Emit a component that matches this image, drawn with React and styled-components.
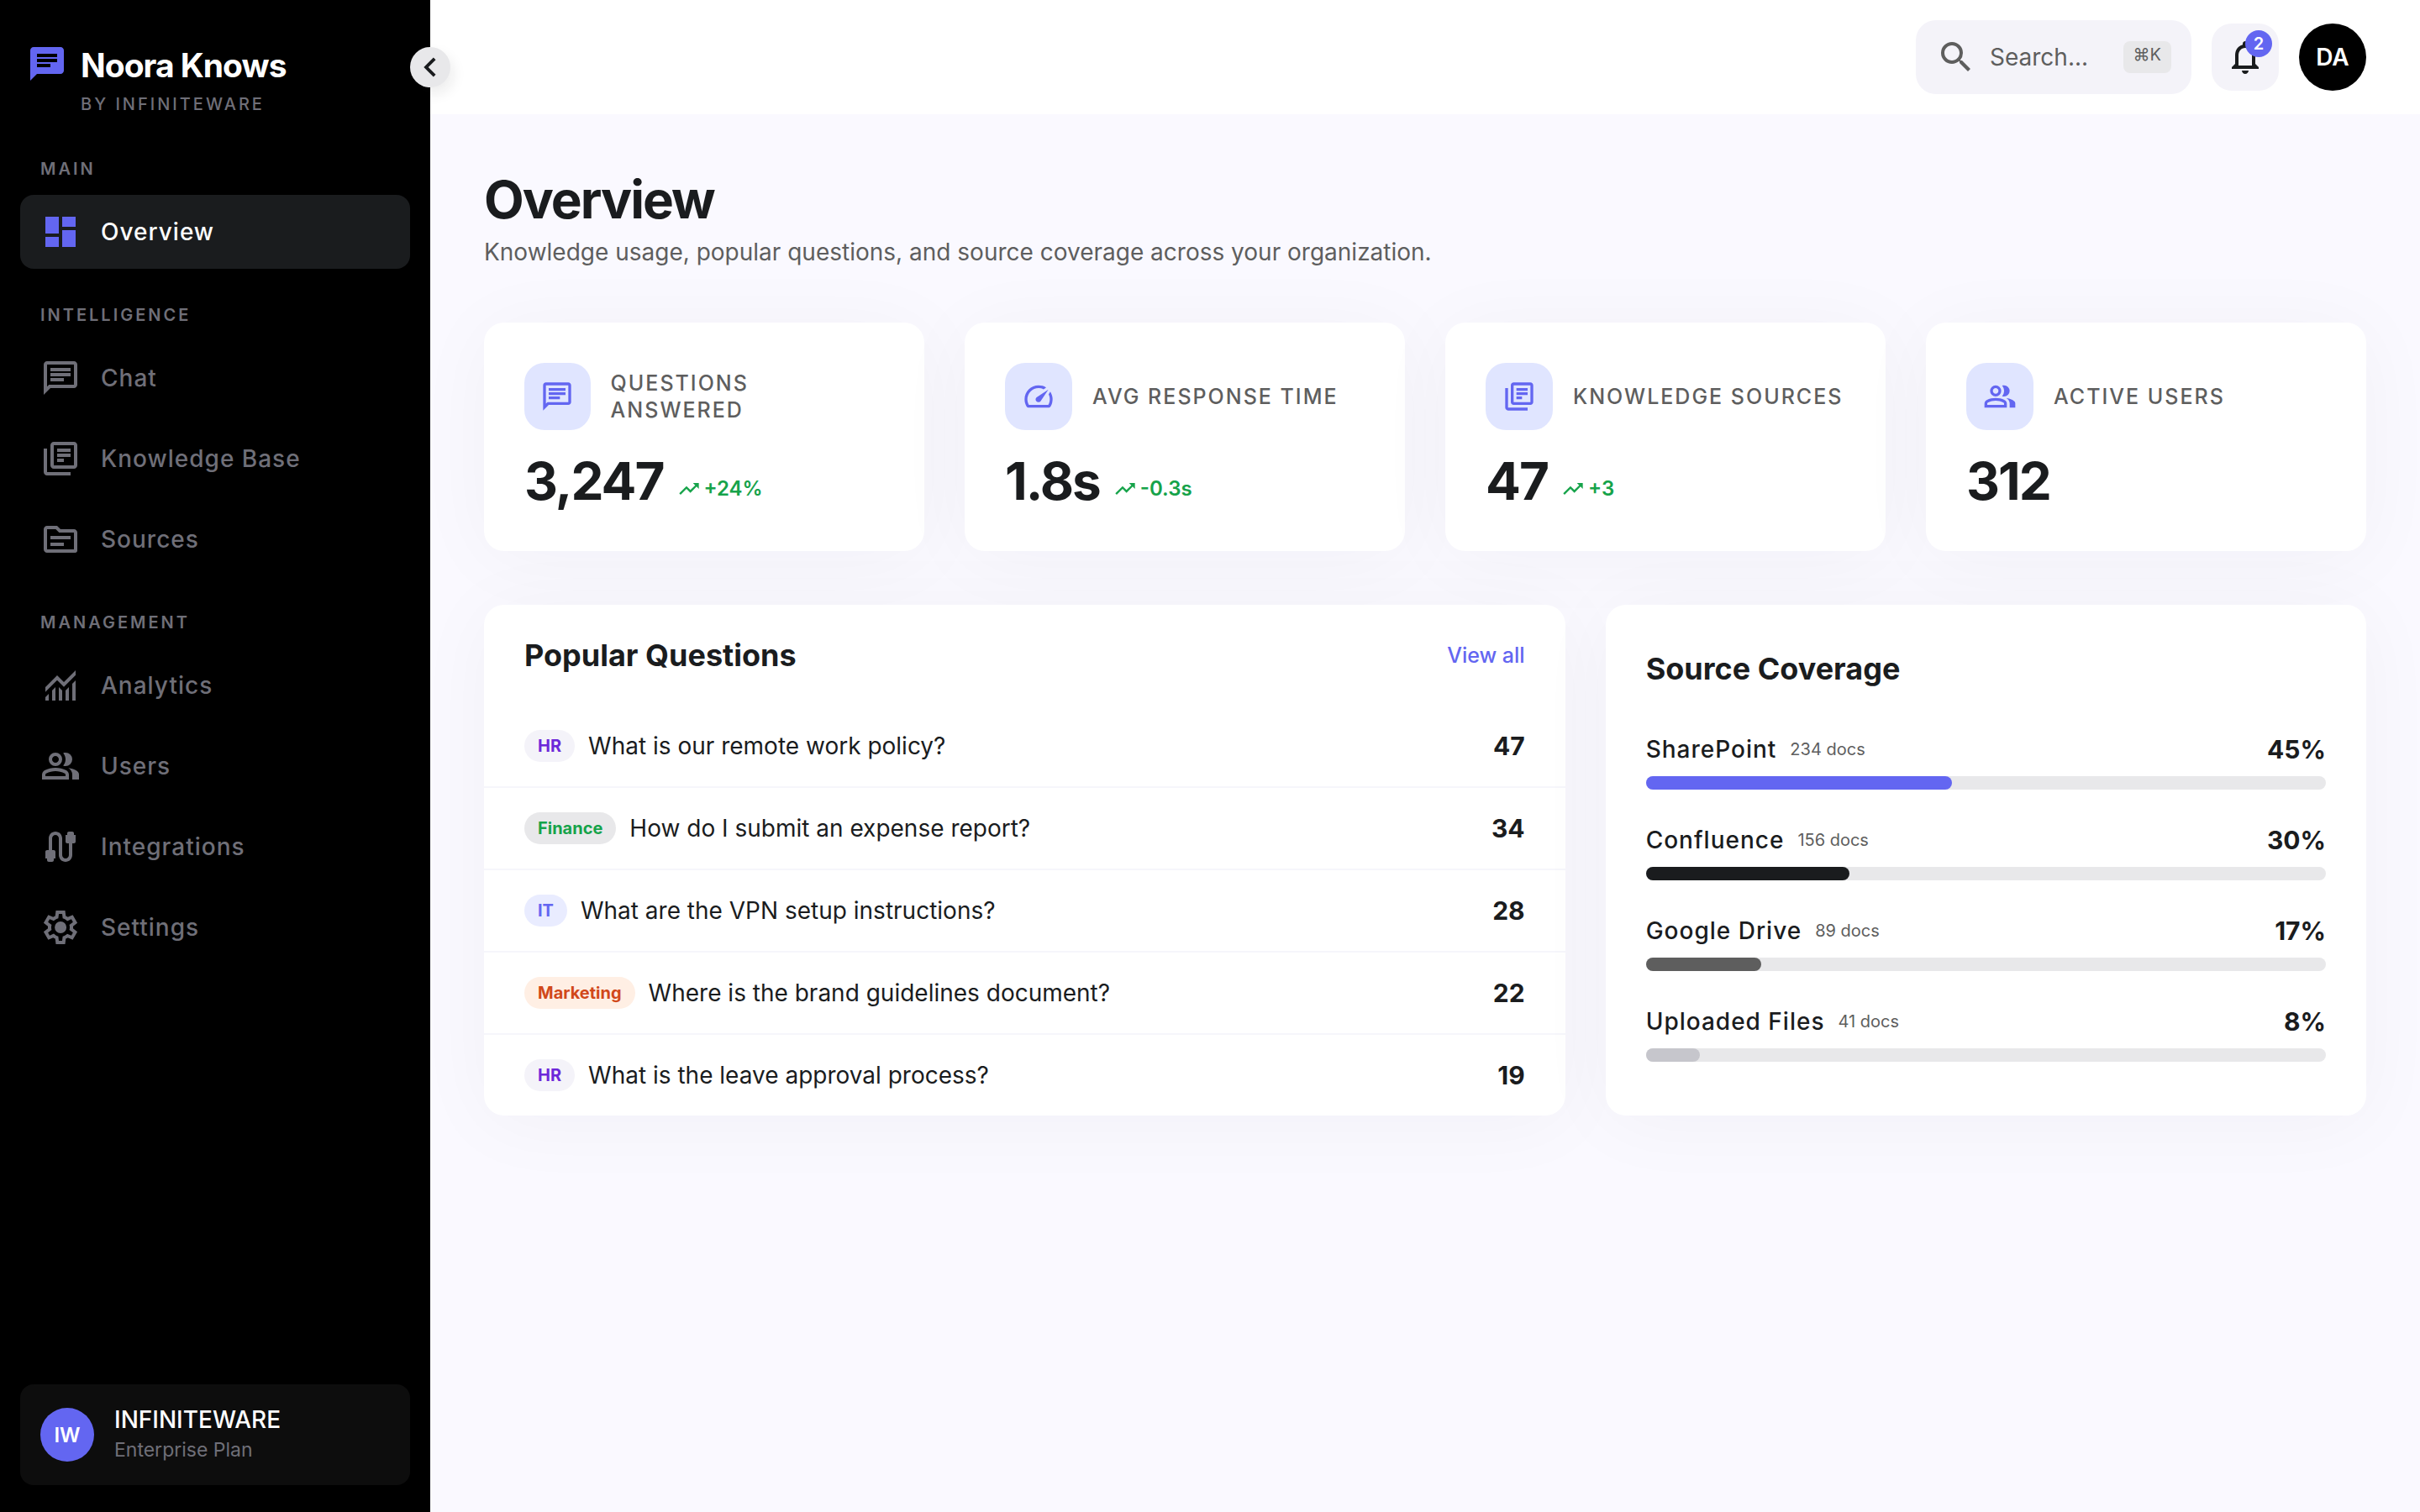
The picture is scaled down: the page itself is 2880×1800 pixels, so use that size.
import React from "react";
import styled, { createGlobalStyle } from "styled-components";
import {
  MdChat,
  MdOutlineChat,
  MdDashboard,
  MdOutlineLibraryBooks,
  MdOutlineTopic,
  MdOutlineCable,
  MdChevronLeft,
  MdSearch,
  MdOutlineNotifications,
  MdTrendingUp,
} from "react-icons/md";

const GlobalStyle = createGlobalStyle`
  *, *::before, *::after {
    box-sizing: border-box;
  }

  body {
    margin: 0;
    background: #faf9ff;
    color: #1a1c1e;
    font-family: Inter, "Liberation Sans", sans-serif;
    font-size: 28px;
  }

  h1, h2, p, ul {
    margin: 0;
    padding: 0;
  }

  ul {
    list-style: none;
  }

  button {
    border: 0;
    padding: 0;
    font: inherit;
    cursor: pointer;
  }

  a {
    text-decoration: none;
  }

  svg {
    flex-shrink: 0;
  }
`;

/* ---------- icons ---------- */

const SymbolSvg = ({ d, size = 48 }) => (
  <svg
    width={size}
    height={size}
    viewBox="0 -960 960 960"
    fill="currentColor"
    aria-hidden="true"
  >
    <path d={d} />
  </svg>
);

const MonitoringIcon = ({ size }) => (
  <SymbolSvg
    size={size}
    d="M120-120v-80l80-80v160h-80Zm160 0v-240l80-80v320h-80Zm160 0v-320l80 81v239h-80Zm160 0v-239l80-80v319h-80Zm160 0v-400l80-80v480h-80ZM120-327v-113l280-280 160 160 280-280v113L560-447 400-607 120-327Z"
  />
);

const GroupIcon = ({ size }) => (
  <SymbolSvg
    size={size}
    d="M40-160v-112q0-34 17.5-62.5T104-378q62-31 126-46.5T360-440q66 0 130 15.5T616-378q29 15 46.5 43.5T680-272v112H40Zm720 0v-120q0-44-24.5-84.5T666-434q51 6 96 20.5t84 35.5q36 20 55 44.5t19 53.5v120H760ZM360-480q-66 0-113-47t-47-113q0-66 47-113t113-47q66 0 113 47t47 113q0 66-47 113t-113 47Zm400-160q0 66-47 113t-113 47q-11 0-28-2.5t-28-5.5q27-32 41.5-71t14.5-81q0-42-14.5-81T544-792q14-5 28-6.5t28-1.5q66 0 113 47t47 113ZM120-240h480v-32q0-11-5.5-20T580-306q-54-27-109-40.5T360-360q-56 0-111 13.5T140-306q-9 5-14.5 14t-5.5 20v32Zm240-320q33 0 56.5-23.5T440-640q0-33-23.5-56.5T360-720q-33 0-56.5 23.5T280-640q0 33 23.5 56.5T360-560Z"
  />
);

const SettingsIcon = ({ size }) => (
  <SymbolSvg
    size={size}
    d="m370-80-16-128q-13-5-24.500-12T307-235l-119 50L78-375l103-78q-1-7-1-13.500v-27q0-6.500 1-13.500L78-585l110-190 119 50q11-8 23-15t24-12l16-128h220l16 128q13 5 24.500 12t22.500 15l119-50 110 190-103 78q1 7 1 13.500v27q0 6.500-2 13.500l103 78-110 190-118-50q-11 8-23 15t-24 12L590-80H370Zm70-80h79l14-106q31-8 57.500-23.500T639-327l99 41 39-68-86-65q5-14 7-29.500t2-31.500q0-16-2-31.500t-7-29.500l86-65-39-68-99 42q-22-23-48.500-38.500T533-694l-13-106h-79l-14 106q-31 8-57.500 23.500T321-633l-99-41-39 68 86 64q-5 15-7 30t-2 32q0 16 2 31t7 30l-86 65 39 68 99-42q22 23 48.500 38.500T427-266l13 106Zm42-180q58 0 99-41t41-99q0-58-41-99t-99-41q-59 0-99.500 41T342-480q0 58 40.500 99t99.500 41Z"
  />
);

const SpeedIcon = ({ size }) => (
  <SymbolSvg
    size={size}
    d="M418-340q24 24 62 23.500t56-27.500l224-336-336 224q-27 18-28.500 55t22.500 61Zm62-460q59 0 113.500 16.500T696-734l-76 48q-33-17-68.500-25.500T480-720q-133 0-226.500 93.500T160-400q0 42 11.500 83t32.500 77h552q23-38 33.500-79t10.500-85q0-36-8.500-70T766-540l48-76q30 47 47.500 100T880-406q1 57-13 109t-41 99q-11 18-30 28t-40 10H204q-21 0-40-10t-30-28q-26-45-40-95.500T80-400q0-83 31.500-155.500t86-127Q252-737 325-768.500T480-800Z"
  />
);

/* ---------- layout ---------- */

const Layout = styled.div`
  display: flex;
  min-height: 100vh;
`;

const Page = styled.div`
  flex: 1;
  min-width: 0;
`;

/* ---------- sidebar ---------- */

const SidebarStyled = styled.aside`
  position: relative;
  display: flex;
  flex-direction: column;
  flex-shrink: 0;
  width: 512px;
  padding: 52px 24px 32px;
  background: #000;
  color: #6f6f78;

  .brand {
    display: grid;
    grid-template-columns: 48px 1fr;
    column-gap: 16px;
    row-gap: 6px;
    padding: 0 8px;
    margin-bottom: 48px;

    svg {
      color: #6366f1;
    }

    &__name {
      color: #fff;
      font-size: 39px;
      font-weight: 700;
      line-height: 52px;
      letter-spacing: -1px;
    }

    &__by {
      grid-column: 2;
      font-size: 20px;
      font-weight: 500;
      line-height: 28px;
      letter-spacing: 3px;
    }
  }
`;

const CollapseButton = styled.button`
  position: absolute;
  top: 56px;
  right: -24px;
  display: flex;
  align-items: center;
  justify-content: center;
  width: 48px;
  height: 48px;
  border-radius: 50%;
  background: #e8e8ea;
  color: #1a1c1e;
  box-shadow: 4px 8px 16px rgba(26, 28, 30, 0.08);
`;

const NavSection = styled.section`
  & + & {
    margin-top: 40px;
  }

  h2 {
    padding: 0 24px;
    margin-bottom: 16px;
    font-size: 20px;
    font-weight: 600;
    line-height: 30px;
    letter-spacing: 3px;
  }

  ul {
    display: grid;
    gap: 8px;
  }
`;

const NavLink = styled.a`
  display: flex;
  align-items: center;
  gap: 24px;
  height: 88px;
  padding: 0 24px;
  border-radius: 16px;
  background: ${({ $active }) => ($active ? "#1a1c1e" : "transparent")};
  color: ${({ $active }) => ($active ? "#fff" : "#6f6f78")};
  font-weight: 500;
  letter-spacing: 1px;

  svg {
    color: ${({ $active }) => ($active ? "#6366f1" : "inherit")};
  }
`;

const Workspace = styled.div`
  display: flex;
  align-items: center;
  gap: 24px;
  height: 120px;
  margin-top: auto;
  padding: 0 24px;
  border-radius: 16px;
  background: #0d0d0d;

  .workspace__name {
    color: #fff;
    font-weight: 500;
    line-height: 36px;
  }

  .workspace__plan {
    font-size: 23px;
    line-height: 36px;
  }
`;

const Avatar = styled.span`
  display: flex;
  align-items: center;
  justify-content: center;
  flex-shrink: 0;
  width: ${({ $size }) => $size}px;
  height: ${({ $size }) => $size}px;
  border-radius: 50%;
  background: ${({ $color }) => $color};
  color: #fff;
  font-size: ${({ $size }) => ($size > 64 ? 28 : 24)}px;
  font-weight: 600;
`;

/* ---------- top bar ---------- */

const TopBar = styled.header`
  display: flex;
  align-items: center;
  justify-content: flex-end;
  gap: 24px;
  height: 136px;
  padding: 0 64px;
  background: #fff;
`;

const SearchBox = styled.label`
  display: flex;
  align-items: center;
  gap: 16px;
  width: 328px;
  height: 88px;
  padding: 0 24px;
  border-radius: 24px;
  background: #f4f3f9;
  color: #5e5e5e;

  input {
    flex: 1;
    min-width: 0;
    padding: 0;
    border: 0;
    outline: 0;
    background: transparent;
    color: inherit;
    font: inherit;

    &::placeholder {
      color: inherit;
      opacity: 1;
    }
  }

  kbd {
    height: 38px;
    padding: 0 12px;
    border-radius: 8px;
    background: #e8e8ea;
    font-family: inherit;
    font-size: 20px;
    line-height: 32px;
  }
`;

const BellButton = styled.button`
  position: relative;
  display: flex;
  align-items: center;
  justify-content: center;
  width: 80px;
  height: 80px;
  border-radius: 24px;
  background: #f4f3f9;
  color: #1a1c1e;

  span {
    position: absolute;
    top: 8px;
    right: 8px;
    width: 32px;
    border-radius: 50%;
    background: #6366f1;
    color: #fff;
    font-size: 20px;
    font-weight: 600;
    line-height: 32px;
  }
`;

/* ---------- overview ---------- */

const Content = styled.main`
  padding: 64px;

  h1 {
    font-size: 62px;
    font-weight: 700;
    line-height: 76px;
    letter-spacing: -2px;
  }

  .subtitle {
    margin: 4px 0 64px;
    color: #5e5e5e;
    line-height: 40px;
  }
`;

const Card = styled.section`
  border-radius: 24px;
  background: #fff;
  box-shadow: 0 8px 96px rgba(26, 28, 40, 0.04);
`;

const Stats = styled.div`
  display: grid;
  grid-template-columns: repeat(4, 1fr);
  gap: 48px;
  margin-bottom: 64px;
`;

const StatCard = styled(Card)`
  padding: 48px;

  .stat__head {
    display: flex;
    align-items: center;
    gap: 24px;
    margin-bottom: 26px;
  }

  .stat__icon {
    display: flex;
    align-items: center;
    justify-content: center;
    width: 80px;
    height: 80px;
    border-radius: 24px;
    background: #e0e5ff;
    color: #6366f1;
  }

  .stat__label {
    color: #5e5e5e;
    font-size: 25px;
    font-weight: 500;
    line-height: 32px;
    letter-spacing: 2px;
  }

  .stat__row {
    display: flex;
    align-items: center;
    gap: 16px;
  }

  .stat__value {
    font-size: 62px;
    font-weight: 700;
    line-height: 70px;
    letter-spacing: -2px;
  }

  .stat__trend {
    display: flex;
    align-items: center;
    gap: 4px;
    padding-top: 18px;
    color: #16a34a;
    font-size: 24px;
    font-weight: 600;
    line-height: 32px;
  }
`;

const Panels = styled.div`
  display: grid;
  grid-template-columns: repeat(12, 1fr);
  gap: 48px;
`;

const PanelTitle = styled.h2`
  font-size: 36px;
  font-weight: 700;
  line-height: 56px;
`;

const QuestionsCard = styled(Card)`
  grid-column: span 7;

  .head {
    display: flex;
    align-items: center;
    justify-content: space-between;
    padding: 32px 48px;

    a {
      color: #6366f1;
      font-size: 25px;
      font-weight: 500;
    }
  }
`;

const Question = styled.li`
  display: flex;
  align-items: center;
  gap: 16px;
  padding: 28px 48px;
  line-height: 40px;

  & + & {
    border-top: 2px solid #f6f6fb;
  }

  strong {
    margin-left: auto;
    font-size: 30px;
    font-weight: 700;
  }
`;

const tones = {
  HR: ["#f4f3f9", "#6d28d9"],
  Finance: ["#e8e8ea", "#16a34a"],
  IT: ["#e9ecff", "#6366f1"],
  Marketing: ["#ffefe4", "#d1481a"],
};

const Tag = styled.span`
  padding: 0 16px;
  border-radius: 20px;
  background: ${({ $tone }) => tones[$tone][0]};
  color: ${({ $tone }) => tones[$tone][1]};
  font-size: 20px;
  font-weight: 700;
  line-height: 38px;
`;

const CoverageCard = styled(Card)`
  grid-column: span 5;
  padding: 48px;

  ul {
    display: grid;
    gap: 40px;
    margin-top: 48px;
  }

  .source {
    display: flex;
    align-items: center;
    gap: 16px;
    margin-bottom: 12px;
    line-height: 40px;

    span {
      font-weight: 500;
      letter-spacing: 1px;
    }

    small {
      color: #5e5e5e;
      font-size: 20px;
    }

    strong {
      margin-left: auto;
      font-size: 30px;
      font-weight: 700;
    }
  }
`;

const Track = styled.div`
  height: 16px;
  border-radius: 8px;
  background: #e8e8ea;
`;

const Fill = styled.div`
  height: 100%;
  border-radius: 8px;
  background: ${({ $color }) => $color};
`;

/* ---------- data ---------- */

const nav = [
  {
    title: "MAIN",
    items: [{ label: "Overview", Icon: MdDashboard, active: true }],
  },
  {
    title: "INTELLIGENCE",
    items: [
      { label: "Chat", Icon: MdOutlineChat },
      { label: "Knowledge Base", Icon: MdOutlineLibraryBooks },
      { label: "Sources", Icon: MdOutlineTopic },
    ],
  },
  {
    title: "MANAGEMENT",
    items: [
      { label: "Analytics", Icon: MonitoringIcon },
      { label: "Users", Icon: GroupIcon },
      { label: "Integrations", Icon: MdOutlineCable },
      { label: "Settings", Icon: SettingsIcon },
    ],
  },
];

const stats = [
  { label: "QUESTIONS ANSWERED", value: "3,247", trend: "+24%", Icon: MdOutlineChat },
  { label: "AVG RESPONSE TIME", value: "1.8s", trend: "-0.3s", Icon: SpeedIcon },
  { label: "KNOWLEDGE SOURCES", value: "47", trend: "+3", Icon: MdOutlineLibraryBooks },
  { label: "ACTIVE USERS", value: "312", Icon: GroupIcon },
];

const questions = [
  { tag: "HR", text: "What is our remote work policy?", count: 47 },
  { tag: "Finance", text: "How do I submit an expense report?", count: 34 },
  { tag: "IT", text: "What are the VPN setup instructions?", count: 28 },
  { tag: "Marketing", text: "Where is the brand guidelines document?", count: 22 },
  { tag: "HR", text: "What is the leave approval process?", count: 19 },
];

const sources = [
  { name: "SharePoint", docs: 234, percent: 45, color: "#6366f1" },
  { name: "Confluence", docs: 156, percent: 30, color: "#1a1c1e" },
  { name: "Google Drive", docs: 89, percent: 17, color: "#5e5e5e" },
  { name: "Uploaded Files", docs: 41, percent: 8, color: "#c6c6cc" },
];

const Sidebar = () => (
  <SidebarStyled>
    <div className="brand">
      <MdChat size={48} />
      <p className="brand__name">Noora Knows</p>
      <p className="brand__by">BY INFINITEWARE</p>
    </div>
    <CollapseButton aria-label="Collapse sidebar">
      <MdChevronLeft size={46} />
    </CollapseButton>

    <nav>
      {nav.map(({ title, items }) => (
        <NavSection key={title}>
          <h2>{title}</h2>
          <ul>
            {items.map(({ label, Icon, active }) => (
              <li key={label}>
                <NavLink href="#" $active={active}>
                  <Icon size={48} />
                  {label}
                </NavLink>
              </li>
            ))}
          </ul>
        </NavSection>
      ))}
    </nav>

    <Workspace>
      <Avatar $size={64} $color="#6366f1">
        IW
      </Avatar>
      <div>
        <p className="workspace__name">INFINITEWARE</p>
        <p className="workspace__plan">Enterprise Plan</p>
      </div>
    </Workspace>
  </SidebarStyled>
);

const App = () => {
  return (
    <Layout>
      <GlobalStyle />
      <Sidebar />
      <Page>
        <TopBar>
          <SearchBox>
            <MdSearch size={48} />
            <input type="text" placeholder="Search..." aria-label="Search" />
            <kbd>⌘K</kbd>
          </SearchBox>
          <BellButton aria-label="Notifications">
            <MdOutlineNotifications size={48} />
            <span>2</span>
          </BellButton>
          <Avatar as="button" $size={80} $color="#000">
            DA
          </Avatar>
        </TopBar>

        <Content>
          <h1>Overview</h1>
          <p className="subtitle">
            Knowledge usage, popular questions, and source coverage across your
            organization.
          </p>

          <Stats>
            {stats.map(({ label, value, trend, Icon }) => (
              <StatCard key={label}>
                <div className="stat__head">
                  <span className="stat__icon">
                    <Icon size={40} />
                  </span>
                  <p className="stat__label">{label}</p>
                </div>
                <div className="stat__row">
                  <p className="stat__value">{value}</p>
                  {trend && (
                    <p className="stat__trend">
                      <MdTrendingUp size={28} />
                      {trend}
                    </p>
                  )}
                </div>
              </StatCard>
            ))}
          </Stats>

          <Panels>
            <QuestionsCard>
              <div className="head">
                <PanelTitle>Popular Questions</PanelTitle>
                <a href="#">View all</a>
              </div>
              <ul>
                {questions.map(({ tag, text, count }) => (
                  <Question key={text}>
                    <Tag $tone={tag}>{tag}</Tag>
                    <span>{text}</span>
                    <strong>{count}</strong>
                  </Question>
                ))}
              </ul>
            </QuestionsCard>

            <CoverageCard>
              <PanelTitle>Source Coverage</PanelTitle>
              <ul>
                {sources.map(({ name, docs, percent, color }) => (
                  <li key={name}>
                    <div className="source">
                      <span>{name}</span>
                      <small>{docs} docs</small>
                      <strong>{percent}%</strong>
                    </div>
                    <Track>
                      <Fill $color={color} style={{ width: `${percent}%` }} />
                    </Track>
                  </li>
                ))}
              </ul>
            </CoverageCard>
          </Panels>
        </Content>
      </Page>
    </Layout>
  );
};

export default App;
